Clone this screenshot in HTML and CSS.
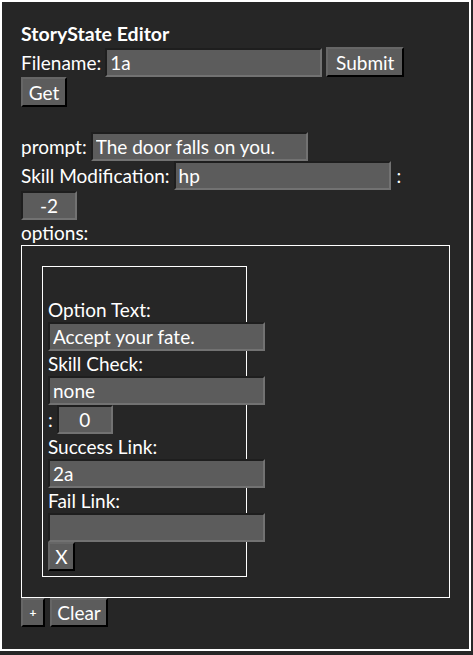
FILE: index.html
```html
<!DOCTYPE html>
<html>
<head>
<meta charset="utf-8">
<link rel="stylesheet" href="styles.css">
</head>
<body>
<div class="editor">
  <div class="title">StoryState Editor</div>
  <div class="row">
    <span class="lbl">Filename:</span>
    <input class="field" type="text" value="1a">
    <button class="btn submit">Submit</button>
  </div>
  <div class="row">
    <button class="btn get">Get</button>
  </div>
  <div class="blank"></div>
  <div class="row">
    <span class="lbl">prompt:</span>
    <input class="field" type="text" value="The door falls on you.">
  </div>
  <div class="row">
    <span class="lbl">Skill Modification:</span>
    <input class="field" type="text" value="hp">
    <span class="lbl colon">:</span>
  </div>
  <div class="row">
    <input class="field num mod" type="text" value="-2">
  </div>
  <div class="lbl-line">options:</div>
  <div class="options">
    <div class="option">
      <div class="spacer"></div>
      <div class="lbl-line">Option Text:</div>
      <input class="field block" type="text" value="Accept your fate.">
      <div class="lbl-line">Skill Check:</div>
      <input class="field block" type="text" value="none">
      <div class="row">
        <span class="lbl">:</span>
        <input class="field num" type="text" value="0">
      </div>
      <div class="lbl-line">Success Link:</div>
      <input class="field block" type="text" value="2a">
      <div class="lbl-line">Fail Link:</div>
      <input class="field block" type="text" value="">
      <button class="btn x">X</button>
    </div>
  </div>
  <div class="row actions">
    <button class="btn plus">+</button>
    <button class="btn clear">Clear</button>
  </div>
</div>
</body>
</html>
```

FILE: styles.css
```css
html, body {
  margin: 0;
  padding: 0;
  background: #262626;
}
body {
  font-family: Lato, "Open Sans", sans-serif;
  font-size: 19px;
  color: #ffffff;
}
.editor {
  width: 471px;
  box-sizing: border-box;
  border: 2px solid #ffffff;
  padding: 19px;
  min-height: 651px;
}
.title {
  font-weight: bold;
  font-size: 19.5px;
  line-height: 26px;
}
.row {
  display: flex;
  align-items: center;
  column-gap: 4px;
}
.lbl {
  line-height: 25px;
}
.colon {
  margin-left: 2px;
}
.lbl-line {
  line-height: 25px;
  height: 25px;
}
.blank {
  height: 25px;
}
.field {
  box-sizing: border-box;
  width: 217px;
  height: 29px;
  margin: 0;
  padding: 0 3px;
  background: #5c5c5c;
  color: #ffffff;
  font: inherit;
  border-style: solid;
  border-width: 2px;
  border-color: #1e1e1e #727272 #727272 #1e1e1e;
  outline: none;
}
.field.num {
  width: 56px;
  text-align: center;
}
.field.mod {
  margin-top: 1px;
}
.field.block {
  display: block;
}
.btn {
  box-sizing: border-box;
  height: 30px;
  margin: 0;
  padding: 0;
  background: #5c5c5c;
  color: #ffffff;
  font: inherit;
  text-align: center;
  border-style: solid;
  border-width: 2px;
  border-color: #666666 #000000 #000000 #666666;
  cursor: pointer;
}
.btn.submit { width: 78px; }
.btn.get { width: 46px; }
.btn.clear { width: 58px; height: 29px; }
.options {
  border: 1px solid #ffffff;
  padding: 20px;
}
.option {
  width: 205px;
  box-sizing: border-box;
  border: 1px solid #ffffff;
  padding: 5px;
}
.option .field.block {
  position: relative;
}
.spacer {
  height: 25px;
}
.btn.x {
  display: block;
  width: 27px;
  height: 29px;
}
.actions {
  column-gap: 5px;
}
.btn.plus {
  width: 24px;
  height: 29px;
  font-size: 12px;
  font-weight: bold;
}
```
